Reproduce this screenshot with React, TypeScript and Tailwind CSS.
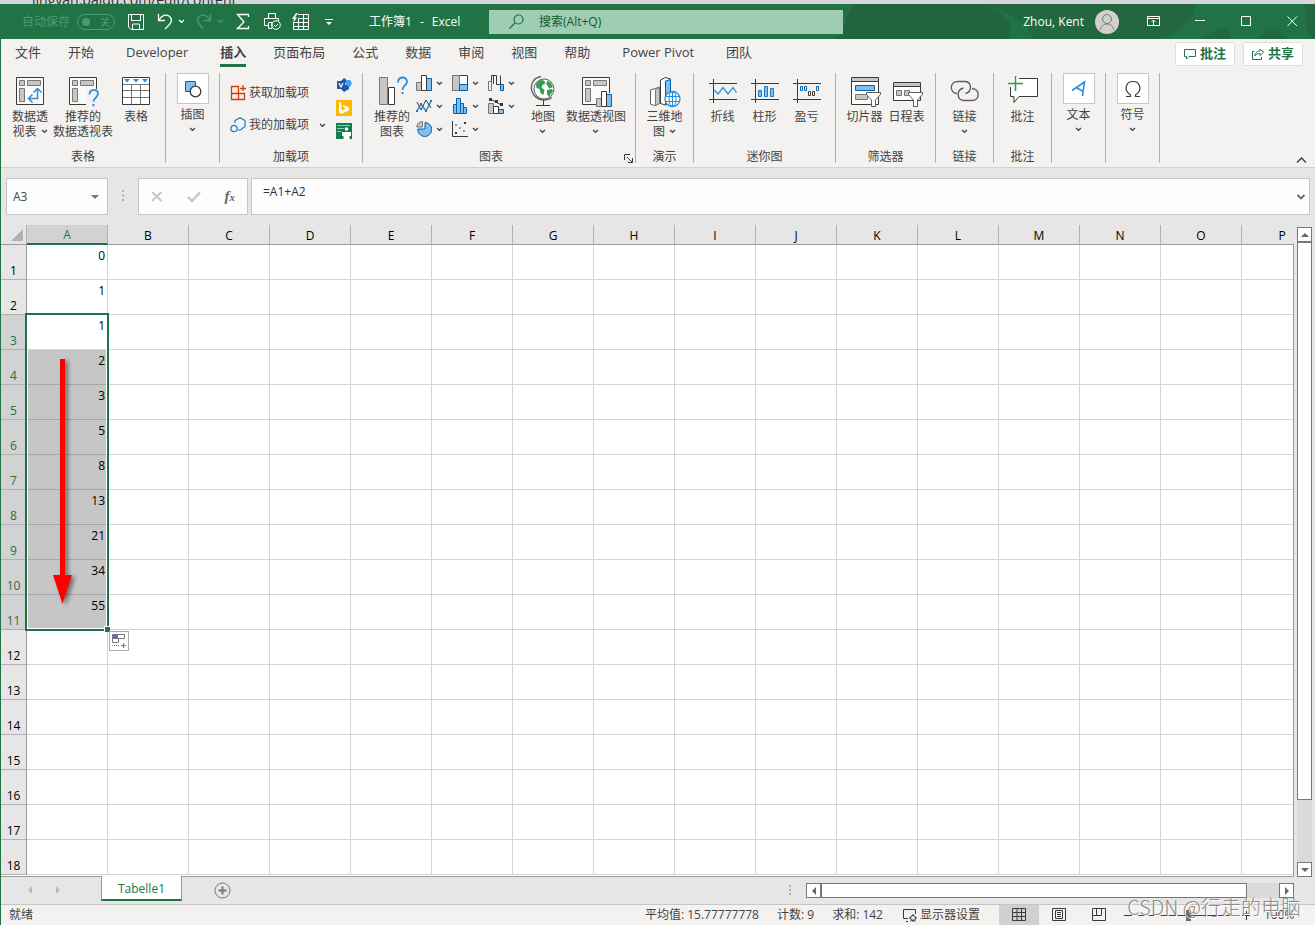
import type { ReactNode } from 'react';
import { useState } from 'react';

const COLUMNS = ['A', 'B', 'C', 'D', 'E', 'F', 'G', 'H', 'I', 'J', 'K', 'L', 'M', 'N', 'O', 'P'];
const VALUES = [0, 1, 1, 2, 3, 5, 8, 13, 21, 34, 55];
const ROW_COUNT = 18;
const SELECTION = { first: 3, last: 11 };

const TABS = [
  { label: '文件' },
  { label: '开始' },
  { label: 'Developer', latin: true },
  { label: '插入' },
  { label: '页面布局' },
  { label: '公式' },
  { label: '数据' },
  { label: '审阅' },
  { label: '视图' },
  { label: '帮助' },
  { label: 'Power Pivot', latin: true },
  { label: '团队' },
];

interface IconProps {
  children: ReactNode;
  size?: number;
  className?: string;
}

function Icon({ children, size = 32, className = '' }: IconProps) {
  return (
    <svg
      width={size}
      height={size}
      viewBox={`0 0 ${size} ${size}`}
      fill="none"
      stroke="#3b3a39"
      aria-hidden="true"
      className={`shrink-0 ${className}`}
    >
      {children}
    </svg>
  );
}

function Chevron({ className = '' }: { className?: string }) {
  return (
    <svg width="7" height="5" viewBox="0 0 7 5" fill="none" stroke="currentColor" strokeWidth="1.3" aria-hidden="true" className={`shrink-0 ${className}`}>
      <path d="M1 1l2.5 2.3L6 1" />
    </svg>
  );
}

function Triangle({ dir }: { dir: 'up' | 'down' | 'left' | 'right' }) {
  const d = {
    up: 'M0 6l4-4 4 4z',
    down: 'M0 2l4 4 4-4z',
    left: 'M6 0L2 4l4 4z',
    right: 'M2 0l4 4-4 4z',
  }[dir];
  return (
    <svg width="8" height="8" viewBox="0 0 8 8" fill="currentColor" aria-hidden="true" className="shrink-0">
      <path d={d} />
    </svg>
  );
}

/* ---------- ribbon icons ---------- */

function PivotFrame() {
  return (
    <>
      <path d="M2.5 2.5h27v27h-27z" fill="#fafafa" />
      <g fill="#c8c6c4" stroke="#797775">
        <path d="M5.5 5.5h5v5h-5zM13.500 5.500h13v5h-13zM5.500 13.500h5v13h-5z" />
      </g>
    </>
  );
}

const PivotTableIcon = () => (
  <Icon>
    <PivotFrame />
    <path d="M15 23.500h8.500V14M18.500 19.500l-4 4 4 4M19.500 17.500l4-4 4 4" stroke="#2b8fd6" strokeWidth="1.500" />
  </Icon>
);

const RecommendedPivotIcon = () => (
  <Icon>
    <PivotFrame />
    <path d="M19 14h12v17H19z" fill="#f3f2f1" stroke="none" />
    <path d="M22.500 19.500c0-6 8.500-6 8.500-.8 0 4-4.500 3.800-4.500 8" stroke="#2b8fd6" strokeWidth="1.800" />
    <path d="M25.500 29h2v2.200h-2z" fill="#2b8fd6" stroke="none" />
  </Icon>
);

const TableIcon = () => (
  <Icon>
    <path d="M2.500 2.500h27v27h-27z" fill="#fff" />
    <path d="M3 9.500h26M3 15.500h26M3 22.500h26M11.500 9v20M20.500 9v20" stroke="#797775" />
    <path d="M4 4h6L7 7.500zM13 4h6l-3 3.500zM22 4h6l-3 3.500z" fill="#2b8fd6" stroke="none" />
  </Icon>
);

const ShapesIcon = () => (
  <Icon size={20}>
    <path d="M2.500 2.500h10v10h-10z" fill="#83beec" stroke="#0063b1" />
    <circle cx="12.500" cy="12.500" r="5.300" fill="#fff" strokeWidth="1.300" />
  </Icon>
);

const RecommendedChartsIcon = () => (
  <Icon>
    <path d="M3.500 2.500h8v27h-8z" fill="#c8c6c4" stroke="#797775" />
    <path d="M12.500 12.500h6v17h-6z" fill="#fff" />
    <path d="M22 7.500c0-6.500 9-6.500 9-1 0 4-4.500 4-4.500 8.500" stroke="#2b8fd6" strokeWidth="1.800" />
    <path d="M25.500 17h2v2h-2z" fill="#2b8fd6" stroke="none" />
  </Icon>
);

const GlobeMapIcon = () => (
  <Icon>
    <circle cx="17" cy="14" r="10" fill="#fff" stroke="#605e5c" />
    <path d="M14 1.500C5 3 2 12 6.500 19.500c5 7 14 6.500 18.500 3" stroke="#605e5c" strokeWidth="1.300" />
    <path d="M9 9l4-4 4 .5 1.500 3-3 1.500-1 2.500 3 2.500-1 5-3-2-1-4-3-1zM20 5.500l4 2.500 2 4-3.500 1.500-3-4zM20 15l5-1 1 2-4 6-2-3z" fill="#2f9e4f" stroke="none" />
    <path d="M16.500 25v5M9 30.500h14" />
  </Icon>
);

const PivotChartIcon = () => (
  <Icon>
    <path d="M16 29.500H2.500v-27h27V18" fill="#fafafa" />
    <path d="M5.500 5.500h5v5h-5zM13.500 5.500h13v5h-13zM5.500 13.500h5v13h-5z" fill="#c8c6c4" stroke="#797775" />
    <path d="M16.500 23.500h5v8h-5z" fill="#c8c6c4" stroke="#797775" />
    <path d="M26.500 19.500h5v12h-5z" fill="#83beec" stroke="#0063b1" />
    <path d="M21.500 16.500h5v15h-5z" fill="#fff" />
  </Icon>
);

const Map3dIcon = () => (
  <Icon>
    <path d="M6.500 13.500l-5 1.500v14l4 1.500 5-2V12z" fill="#fff" stroke="#605e5c" />
    <path d="M6.500 14.500l4-2v16l-4 2z" fill="#c8c6c4" stroke="#797775" />
    <path d="M11.500 5l5-2.500 5 1.500v24l-5 2-5-1.500z" fill="#fff" />
    <path d="M16.500 6l5-1.500v23l-5 2z" fill="#83beec" stroke="#0063b1" />
    <circle cx="23.500" cy="24" r="7.500" fill="#fff" stroke="#2b8fd6" strokeWidth="1.300" />
    <ellipse cx="23.500" cy="24" rx="3.500" ry="7.500" stroke="#2b8fd6" />
    <path d="M17 21.500h13M17 26.500h13M23.500 17v14" stroke="#2b8fd6" />
  </Icon>
);

const SparkFrame = () => <path d="M6.500 4v24M2 8.500h28M2 24.500h28" />;

const SparkLineIcon = () => (
  <Icon>
    <SparkFrame />
    <path d="M7 15l4 4 5-6.500 5 6.500 5-6.500 3.500 5" stroke="#2b8fd6" strokeWidth="1.300" />
  </Icon>
);

const SparkColumnIcon = () => (
  <Icon>
    <SparkFrame />
    <path d="M9.500 15.500h3v6h-3zM15.500 11.500h3v10h-3zM21.500 13.500h3v8h-3z" fill="#83beec" stroke="#1979c4" />
  </Icon>
);

const SparkWinLossIcon = () => (
  <Icon>
    <SparkFrame />
    <path d="M9.500 11.500h2v4h-2zM13.500 11.500h2v4h-2zM25.500 11.500h2v4h-2z" fill="#fff" stroke="#0063b1" />
    <path d="M17.500 16.500h2v4h-2zM21.500 16.500h2v4h-2z" fill="#fff" />
  </Icon>
);

const Funnel = () => (
  <path d="M17.500 17.500h14v2l-5 5.500v6.500h-4V25l-5-5.500z" fill="#fff" stroke="#605e5c" />
);

const SlicerIcon = () => (
  <Icon>
    <path d="M2.500 2.500h27v27h-27z" fill="#fff" />
    <path d="M3 3h26v3H3z" fill="#c8c6c4" stroke="none" />
    <path d="M3 6.500h26" />
    <path d="M6.500 10.500h19v5h-19z" fill="#83beec" stroke="#0063b1" />
    <path d="M6.500 19.500h12v5h-12z" fill="#c8c6c4" stroke="#797775" />
    <Funnel />
  </Icon>
);

const TimelineIcon = () => (
  <Icon>
    <path d="M2.500 7.500h27v18h-27z" fill="#fff" />
    <path d="M3 8h26v3H3z" fill="#c8c6c4" stroke="none" />
    <path d="M3 11.500h26" />
    <path d="M5.500 15.500h5v5h-5zM13.500 15.500h5v5h-5z" fill="#c8c6c4" stroke="#797775" />
    <Funnel />
  </Icon>
);

const LinkIcon = () => (
  <Icon>
    <g stroke="#605e5c" strokeWidth="1.400">
      <path d="M8 18.500C0 17.500.5 6.500 9 6.500h6.500c7.500 0 8 10 1 12" />
      <path d="M12.500 25.500" />
      <path d="M23 13.500c8.500.5 8 12 0 12H15.500c-8 0-8.500-10.500-1-12.500" />
    </g>
  </Icon>
);

const NewCommentIcon = () => (
  <Icon>
    <path d="M3.500 3.500h27v18H14l-6.500 6v-6h-4z" fill="#fff" stroke="none" />
    <path d="M12 3.500h18.500v18H12l-5 6v-6H3.500V12" />
    <path d="M1 8.500h15M8.500 1v15" stroke="#f3f2f1" strokeWidth="4" />
    <path d="M1 8.500h15M8.500 1v15" stroke="#2f9e4f" strokeWidth="1.400" />
  </Icon>
);

const AddInsIcon = () => (
  <Icon size={16}>
    <path d="M8.500 8.500h6v6h-6zM1.500 8.500h7v6h-7zM1.500 1.500h7v7h-7zM13 0v6M10 3.500h6" stroke="#d83b01" strokeWidth="1.300" />
  </Icon>
);

const MyAddInsIcon = () => (
  <Icon size={16}>
    <path d="M5 6V3.500L10 .8l5 2.700v6L10.500 13H8" stroke="#1979c4" strokeWidth="1.200" />
    <circle cx="4" cy="11.500" r="3.200" stroke="#1979c4" strokeWidth="1.200" />
  </Icon>
);

const VisioIcon = () => (
  <Icon size={16}>
    <path d="M8 1l4 3-4 3-3-3zM8 8l5-2v6l-5 3-3-3z" fill="#185abd" stroke="none" />
    <path d="M10 3h4l2 3-2 4-4-2z" fill="#41a5ee" stroke="none" />
    <path d="M1 4h8v8H1z" fill="#2b579a" stroke="none" />
    <path d="M3 6l2 4 2-4" stroke="#fff" strokeWidth="1.200" />
  </Icon>
);

const BingIcon = () => (
  <Icon size={16}>
    <path d="M0 0h16v16H0z" fill="#ffb900" stroke="none" />
    <path d="M3 2l2.500 1v7.500L10 8.500 7.500 7 6.800 5 13 7.500v2.700L5.500 14 3 12.500z" fill="#fff" stroke="none" />
  </Icon>
);

const PeopleGraphIcon = () => (
  <Icon size={16}>
    <path d="M0 0h16v16H0z" fill="#107c4f" stroke="none" />
    <path d="M1 2.500h13M1 5.500h7M1 8.500h4" stroke="#8ecbb0" />
    <circle cx="10.500" cy="6" r="1.800" fill="#fff" stroke="none" />
    <path d="M6 9h9v4h-1.500v-2v5h-6v-5v2H6z" fill="#fff" stroke="none" />
  </Icon>
);

const CHARTS: { name: string; art: ReactNode }[] = [
  {
    name: '柱形图',
    art: (
      <>
        <path d="M.5 7.500h5v8h-5z" fill="#c8c6c4" stroke="#797775" />
        <path d="M10.500 3.500h5v12h-5z" fill="#83beec" stroke="#0063b1" />
        <path d="M5.500.5h5v15h-5z" fill="#fff" />
      </>
    ),
  },
  {
    name: '层次结构图',
    art: (
      <>
        <path d="M.5.5h15v15H.5z" fill="#fff" />
        <path d="M.5.5h7v15h-7z" fill="#c8c6c4" stroke="#797775" />
        <path d="M7.500 9.500h8v6h-8z" fill="#83beec" stroke="#0063b1" />
      </>
    ),
  },
  {
    name: '瀑布图',
    art: (
      <>
        <path d="M.5 15.500v-9h3v9z" stroke="#797775" />
        <path d="M3.500 6.500v-6h5v9h4v-9M5.500 1v8" />
        <path d="M12.500 9.500h3v6h-3z" fill="#83beec" stroke="#0063b1" />
      </>
    ),
  },
  {
    name: '折线图',
    art: (
      <>
        <path d="M1 4l4 8 5-10 5 8" />
        <path d="M1 13l4-7 5 7 5-10" stroke="#1979c4" strokeWidth="1.300" />
        <path d="M0 12h2v2H0zM4 5h2v2H4zM9 12h2v2H9zM14 2h2v2h-2z" fill="#1979c4" stroke="none" />
      </>
    ),
  },
  {
    name: '统计图',
    art: (
      <path d="M1.500 6.500h3v9h-3zM4.500.5h4v15h-4zM8.500 5.500h3v10h-3zM11.500 9.500h3v6h-3z" fill="#83beec" stroke="#0063b1" />
    ),
  },
  {
    name: '组合图',
    art: (
      <>
        <path d="M.5 5.500h5v10h-5z" fill="#c8c6c4" stroke="#797775" />
        <path d="M10.500 11.500h5v4h-5z" fill="#83beec" stroke="#0063b1" />
        <path d="M5.500 8.500h5v7h-5z" fill="#fff" />
        <path d="M2 1l6 3 5 3" />
        <path d="M1 0h3v3H1zM7 2h3v3H7zM12 5h3v3h-3z" fill="#3b3a39" stroke="none" />
      </>
    ),
  },
  {
    name: '饼图',
    art: (
      <>
        <path d="M9 1.500V8H1.800A7 7 0 1 0 9 1.500z" fill="#83beec" stroke="#0063b1" />
        <path d="M6.500.5v5.500H.8A6 6 0 0 1 6.500.5z" fill="#c8c6c4" stroke="#797775" />
      </>
    ),
  },
  {
    name: '散点图',
    art: (
      <>
        <path d="M.5 0v15.500H16" />
        <path d="M3 3h2v2H3zM7 6h2v2H7zM11 9h2v2h-2z" fill="#5ea9e0" stroke="none" />
        <path d="M12 1h2v2h-2zM3 11h2v2H3z" fill="#3b3a39" stroke="none" />
      </>
    ),
  },
];

/* ---------- ribbon pieces ---------- */

interface GroupProps {
  label?: string;
  width: string;
  labelClass?: string;
  children: ReactNode;
}

function Group({ label, width, labelClass = '', children }: GroupProps) {
  return (
    <section className={`relative flex h-[90px] shrink-0 flex-col justify-between border-r border-[#b3b0ad] ${width}`}>
      <div className="flex justify-center">{children}</div>
      {label && <h2 className={`text-center text-xs leading-3 ${labelClass}`}>{label}</h2>}
    </section>
  );
}

interface LargeButtonProps {
  icon: ReactNode;
  lines: string[];
  width: string;
  menu?: 'inline' | 'below';
}

function LargeButton({ icon, lines, width, menu }: LargeButtonProps) {
  return (
    <button type="button" className={`flex flex-col items-center gap-[2px] pt-[2px] hover:bg-[#e1dfdd] ${width}`}>
      {icon}
      <span className="text-center text-xs leading-[15px] whitespace-nowrap">
        {lines.map((line, i) => (
          <span key={line} className="flex items-center justify-center gap-1">
            {line}
            {menu === 'inline' && i === lines.length - 1 && <Chevron />}
          </span>
        ))}
        {menu === 'below' && (
          <span className="flex h-[15px] items-center justify-center">
            <Chevron />
          </span>
        )}
      </span>
    </button>
  );
}

function BoxButton({ icon, label }: { icon: ReactNode; label: string }) {
  return (
    <button type="button" className="flex flex-col items-center text-xs leading-[15px]">
      <span className="mb-[3px] flex h-[31px] w-8 items-center justify-center border border-[#c8c6c4] bg-white">{icon}</span>
      {label}
      <span className="flex h-[15px] items-center">
        <Chevron />
      </span>
    </button>
  );
}

function TitleBar() {
  return (
    <header className="relative flex h-[35px] shrink-0 items-center bg-[#217346] text-xs text-white">
      <svg className="absolute right-0 top-0 h-full w-[480px]" viewBox="0 0 480 35" aria-hidden="true">
        <path d="M20 0h130c20 6 30 20 24 35H0C14 26 8 10 20 0z" fill="#21653f" />
        <path d="M150 0h210c0 15-20 35-40 35H200c-10-14-20-26-50-35z" fill="#216840" />
        <path d="M375 30c8-8 20-8 22 5h-30zM425 32c6-8 20-8 28 3h-30zM470 0h10v35c-12-8-8-20-10-35z" fill="#216840" />
      </svg>
      <div className="relative flex w-[369px] shrink-0 items-center pl-[22px]">
        <label className="flex items-center gap-[7px] text-[#4e9a70]">
          自动保存
          <button type="button" role="switch" aria-checked="false" className="flex h-4 w-[38px] items-center justify-between rounded-full border border-[#4e9a70] px-1">
            <span className="h-2 w-2 rounded-full bg-[#4e9a70]" />
            <span className="text-[10px] leading-3">关</span>
          </button>
        </label>
        <button type="button" aria-label="保存" className="ml-[13px]">
          <Icon size={17}>
            <path d="M.5 1.500h15v15H3l-2.500-2.500zM3.500 1.500v6h9v-6M4.500 16v-5h7v5" stroke="#fff" />
          </Icon>
        </button>
        <button type="button" aria-label="撤消" className="ml-[12px]">
          <Icon size={17}>
            <path d="M1.500 1v6.500H8M1.500 7.500C5 2 9 1 12 3c4 3 2.500 6.500 0 9l-4 4" stroke="#fff" strokeWidth="1.300" />
          </Icon>
        </button>
        <Chevron className="ml-[4px]" />
        <button type="button" aria-label="恢复" className="ml-[11px]">
          <Icon size={17}>
            <path d="M14.500 1v6.500H8M14.500 7.500C11 2 7 1 4 3 0 6 1.500 9.500 4 12l3 4" stroke="#4e9a70" strokeWidth="1.300" />
          </Icon>
        </button>
        <Chevron className="ml-[4px] text-[#4e9a70]" />
        <button type="button" aria-label="求和" className="ml-[12px]">
          <Icon size={17}>
            <path d="M12.500 4V1.500h-11L8 9l-6.500 6.500h11V13" stroke="#fff" strokeWidth="1.300" />
          </Icon>
        </button>
        <button type="button" aria-label="打印预览" className="ml-[11px]">
          <Icon size={17}>
            <path d="M4.500 5.500v-5h7v5M4 12.500H.5v-7h14V8M4.500 10v5.500H8V9.500H4.500" stroke="#fff" />
            <circle cx="12" cy="12" r="4.300" stroke="#fff" />
            <path d="M10 12l1.500 1.500L14 11" stroke="#fff" />
          </Icon>
        </button>
        <button type="button" aria-label="表格" className="ml-[11px]">
          <Icon size={17}>
            <path d="M6 1.500h10.500v15H1.500V9M6 5.500h10.500M1.500 9.500h15M1.500 13.500h15M6.500 6v10.500M11.500 1.500v15" stroke="#fff" />
            <path d="M4 0L0 6h2L1 10l4-5.500H3L6 0z" fill="#fff" stroke="none" />
          </Icon>
        </button>
        <button type="button" aria-label="自定义快速访问工具栏" className="ml-[16px]">
          <Icon size={8}>
            <path d="M0 1.500h8" stroke="#fff" />
            <path d="M1 4h6L4 7z" fill="#fff" stroke="none" />
          </Icon>
        </button>
      </div>
      <h1 className="relative flex w-[120px] shrink-0 gap-2 whitespace-nowrap">
        <span>工作簿1</span>
        <span>-</span>
        <span>Excel</span>
      </h1>
      <label className="relative flex h-6 w-[354px] items-center bg-[#9fcdb3] pl-5 text-[#0f5a30]">
        <Icon size={15}>
          <path d="M.5 14.500L6 9" stroke="#1d6b40" strokeWidth="1.300" />
          <circle cx="9.500" cy="5.500" r="4.500" stroke="#1d6b40" strokeWidth="1.200" />
        </Icon>
        <input type="search" aria-label="搜索" placeholder="搜索(Alt+Q)" className="ml-[15px] min-w-0 flex-1 bg-transparent outline-none placeholder:text-[#0f5a30]" />
      </label>
      <div className="relative ml-auto flex items-center">
        <span>Zhou, Kent</span>
        <button type="button" aria-label="帐户" className="ml-[11px] mr-[12px] h-6 w-6 overflow-hidden rounded-full bg-[#d2d0ce]">
          <Icon size={24}>
            <circle cx="12" cy="9" r="4.500" stroke="#797775" />
            <path d="M5.500 20c0-8 13-8 13 0" stroke="#797775" />
          </Icon>
        </button>
        <button type="button" aria-label="功能区显示选项" className="flex w-[46px] justify-center">
          <Icon size={14}>
            <path d="M.5 1.500h12v9H.5zM.5 3.500h12M6.500 10V5.500M4.500 7l2-2 2 2" stroke="#fff" />
          </Icon>
        </button>
        <button type="button" aria-label="最小化" className="flex w-[46px] justify-center">
          <Icon size={11}>
            <path d="M0 4.500h10" stroke="#fff" />
          </Icon>
        </button>
        <button type="button" aria-label="最大化" className="flex w-[46px] justify-center">
          <Icon size={11}>
            <path d="M.5.5h9v9h-9z" stroke="#fff" />
          </Icon>
        </button>
        <button type="button" aria-label="关闭" className="flex w-[46px] justify-center">
          <Icon size={11}>
            <path d="M.5.5l9.500 9.500M10 .5L.5 10" stroke="#fff" />
          </Icon>
        </button>
      </div>
    </header>
  );
}

function TabStrip({ active, onSelect }: { active: string; onSelect: (label: string) => void }) {
  return (
    <nav className="flex h-[29px] items-start pl-[14px] pr-3">
      <div className="flex gap-[27px] text-[13px]">
        {TABS.map((tab) => (
          <button
            key={tab.label}
            type="button"
            onClick={() => onSelect(tab.label)}
            className={`h-7 shrink-0 border-b-[3px] pt-[3px] whitespace-nowrap ${tab.latin ? 'mx-[5px]' : ''} ${
              tab.label === active ? 'border-[#217346] font-bold' : 'border-transparent'
            }`}
          >
            {tab.label}
          </button>
        ))}
      </div>
      <div className="ml-auto flex gap-2 pt-[3px] text-[13px] font-bold text-[#217346]">
        <button type="button" className="flex h-6 w-[60px] items-center justify-center gap-1 rounded-xs border border-[#e1dfdd] bg-white">
          <Icon size={12}>
            <path d="M.5 1.500h11v7H5L2.500 11V8.500h-2z" stroke="#217346" />
          </Icon>
          批注
        </button>
        <button type="button" className="flex h-6 w-[60px] items-center justify-center gap-1 rounded-xs border border-[#e1dfdd] bg-white">
          <Icon size={12}>
            <path d="M2.500 3.500h-2v8h9V9M3 8c0-4 3-5 5-5V1l3.500 3.200L8 7.500v-2C6 5.500 4 6 3 8z" stroke="#217346" />
          </Icon>
          共享
        </button>
      </div>
    </nav>
  );
}

function Ribbon() {
  return (
    <div className="relative flex h-[100px] border-b border-[#d2d0ce] pt-[5px]">
      <Group label="表格" width="w-[165px]">
        <LargeButton icon={<PivotTableIcon />} lines={['数据透', '视表']} width="w-[48px]" menu="inline" />
        <LargeButton icon={<RecommendedPivotIcon />} lines={['推荐的', '数据透视表']} width="w-[58px]" />
        <LargeButton icon={<TableIcon />} lines={['表格']} width="w-[48px]" />
      </Group>
      <Group width="w-[54px]">
        <BoxButton icon={<ShapesIcon />} label="插图" />
      </Group>
      <Group label="加载项" width="w-[143px]">
        <div className="flex w-full justify-between pl-[10px] pr-[10px] text-xs">
          <div className="flex flex-col pt-1">
            <button type="button" className="flex h-8 items-center gap-[3px]">
              <AddInsIcon />
              获取加载项
            </button>
            <button type="button" className="flex h-8 items-center gap-[3px]">
              <MyAddInsIcon />
              我的加载项
              <Chevron className="ml-[7px]" />
            </button>
          </div>
          <div className="flex flex-col gap-[7px] pt-[4px]">
            <button type="button" aria-label="Visio"><VisioIcon /></button>
            <button type="button" aria-label="Bing"><BingIcon /></button>
            <button type="button" aria-label="People Graph"><PeopleGraphIcon /></button>
          </div>
        </div>
      </Group>
      <Group label="图表" width="w-[273px]" labelClass="pr-4">
        <LargeButton icon={<RecommendedChartsIcon />} lines={['推荐的', '图表']} width="w-[44px]" />
        <div className="grid grid-cols-3 gap-x-[2px] gap-y-[3px] self-start pl-[2px]">
          {CHARTS.map((chart) => (
            <button key={chart.name} type="button" aria-label={chart.name} className="flex h-5 w-[34px] items-center gap-1">
              <Icon size={16}>{chart.art}</Icon>
              <Chevron />
            </button>
          ))}
        </div>
        <LargeButton icon={<GlobeMapIcon />} lines={['地图']} width="w-[42px]" menu="below" />
        <LargeButton icon={<PivotChartIcon />} lines={['数据透视图']} width="w-[64px]" menu="below" />
        <button type="button" aria-label="查看所有图表" className="absolute right-[2px] bottom-0">
          <Icon size={9}>
            <path d="M.5 6V.5H6M3 3l5 5M8.500 4v4.500H4" />
          </Icon>
        </button>
      </Group>
      <Group label="演示" width="w-[58px]">
        <LargeButton icon={<Map3dIcon />} lines={['三维地', '图']} width="w-[46px]" menu="inline" />
      </Group>
      <Group label="迷你图" width="w-[142px]">
        <LargeButton icon={<SparkLineIcon />} lines={['折线']} width="w-[42px]" />
        <LargeButton icon={<SparkColumnIcon />} lines={['柱形']} width="w-[42px]" />
        <LargeButton icon={<SparkWinLossIcon />} lines={['盈亏']} width="w-[42px]" />
      </Group>
      <Group label="筛选器" width="w-[100px]">
        <LargeButton icon={<SlicerIcon />} lines={['切片器']} width="w-[42px]" />
        <LargeButton icon={<TimelineIcon />} lines={['日程表']} width="w-[42px]" />
      </Group>
      <Group label="链接" width="w-[58px]">
        <LargeButton icon={<LinkIcon />} lines={['链接']} width="w-[42px]" menu="below" />
      </Group>
      <Group label="批注" width="w-[58px]">
        <LargeButton icon={<NewCommentIcon />} lines={['批注']} width="w-[42px]" />
      </Group>
      <Group width="w-[54px]">
        <BoxButton
          label="文本"
          icon={
            <Icon size={18}>
              <path d="M2 10.500L14.500 2 12.500 16M6 7.500l7.500 4" stroke="#2b8fd6" strokeWidth="1.600" />
            </Icon>
          }
        />
      </Group>
      <Group width="w-[54px]">
        <BoxButton
          label="符号"
          icon={
            <Icon size={18}>
              <path d="M2 16.500h4.500V15C-1 10 2 1.500 9 1.500S19 10 11.500 15v1.500H16" strokeWidth="1.200" />
            </Icon>
          }
        />
      </Group>
      <button type="button" aria-label="折叠功能区" className="absolute right-2 bottom-px">
        <Icon size={11}>
          <path d="M1 7.500L5.500 3 10 7.500" strokeWidth="1.300" />
        </Icon>
      </button>
    </div>
  );
}

function FormulaBar() {
  return (
    <div className="flex h-[57px] items-start bg-[#e6e6e6] pl-[5px] pr-[5px] pt-[10px] text-xs">
      <div className="flex h-[37px] w-[102px] items-center border border-[#c6c6c6] bg-[#fdfdfd] pl-[6px] pr-2 text-[#444]">
        <input aria-label="名称框" defaultValue="A3" className="min-w-0 flex-1 bg-transparent outline-none" />
        <button type="button" aria-label="名称列表" className="text-[#777]">
          <Triangle dir="down" />
        </button>
      </div>
      <Icon size={30} className="mt-[3px]">
        <path d="M14 9h2v2h-2zM14 13.500h2v2h-2zM14 18h2v2h-2z" fill="#b1b1b1" stroke="none" />
      </Icon>
      <div className="flex h-[37px] w-[110px] items-center justify-around border border-[#c6c6c6] bg-[#fdfdfd]">
        <button type="button" aria-label="取消">
          <Icon size={12}>
            <path d="M1 1l9.500 9M10.500 1L1 10" stroke="#c6c6c6" strokeWidth="2" />
          </Icon>
        </button>
        <button type="button" aria-label="输入">
          <Icon size={14}>
            <path d="M1 7l4 4 8-8.500" stroke="#c6c6c6" strokeWidth="2.400" />
          </Icon>
        </button>
        <button type="button" aria-label="插入函数" className="font-['Liberation_Serif',serif] text-[15px] leading-4 font-bold text-[#666] italic">
          f<span className="text-[11px]">x</span>
        </button>
      </div>
      <div className="ml-[3px] flex h-[37px] flex-1 items-center border border-[#c6c6c6] bg-[#fdfdfd] pl-[11px] pr-1">
        <input aria-label="编辑栏" defaultValue="=A1+A2" className="mb-[9px] min-w-0 flex-1 bg-transparent text-[#333] outline-none" />
        <button type="button" aria-label="展开编辑栏" className="text-[#666]">
          <svg width="8" height="6" viewBox="0 0 8 6" fill="none" stroke="currentColor" strokeWidth="1.8" aria-hidden="true">
            <path d="M.5 1L4 4.500 7.500 1" />
          </svg>
        </button>
      </div>
    </div>
  );
}

function Sheet() {
  const isSelected = (row: number) => row >= SELECTION.first && row <= SELECTION.last;

  return (
    <div className="relative min-w-0 flex-1 overflow-hidden border-b border-[#999] bg-white pb-px">
      <table className="w-[1322px] table-fixed border-separate border-spacing-0 text-xs text-black">
        <colgroup>
          <col className="w-[26px]" />
          {COLUMNS.map((c) => (
            <col key={c} className="w-[81px]" />
          ))}
        </colgroup>
        <thead>
          <tr className="h-5">
            <th className="border-r border-b border-r-[#b1b1b1] border-b-[#999] bg-[#e6e6e6] p-0">
              <svg width="12" height="12" viewBox="0 0 12 12" aria-hidden="true" className="ml-auto mr-[3px]">
                <path d="M12 0v12H0z" fill="#b1b1b1" />
              </svg>
            </th>
            {COLUMNS.map((c) => (
              <th
                key={c}
                scope="col"
                className={`border-r border-r-[#b1b1b1] p-0 pt-[2px] font-normal ${
                  c === 'A' ? 'border-b-2 border-b-[#217346] bg-[#d2d2d2] text-[#217346]' : 'border-b border-b-[#999] bg-[#e6e6e6]'
                }`}
              >
                {c}
              </th>
            ))}
          </tr>
        </thead>
        <tbody>
          {Array.from({ length: ROW_COUNT }, (_, i) => i + 1).map((row) => (
            <tr key={row} className="h-[35px]">
              <th
                scope="row"
                className={`border-r border-b border-r-[#999] border-b-[#b1b1b1] p-0 align-bottom leading-4 font-normal ${
                  isSelected(row) ? 'bg-[#d2d2d2] text-[#217346]' : 'bg-[#e6e6e6]'
                }`}
              >
                {row}
              </th>
              {COLUMNS.map((c) => (
                <td
                  key={c}
                  className={`border-r border-b border-r-[#d4d4d4] p-0 pr-[2px] text-right align-top leading-[22px] ${
                    c === 'A' && isSelected(row) && row !== SELECTION.first ? 'border-b-[#a6a6a6] bg-[#c6c6c6]' : 'border-b-[#d4d4d4]'
                  }`}
                >
                  {c === 'A' ? VALUES[row - 1] : null}
                </td>
              ))}
            </tr>
          ))}
        </tbody>
      </table>

      {/* selection frame with its fill handle */}
      <div className="pointer-events-none absolute top-[88px] left-[24px] h-[318px] w-[84px] border-2 border-[#217346]">
        <div className="h-full w-full border border-t-0 border-white" />
        <div className="absolute -right-[3px] -bottom-[3px] h-[6px] w-[6px] border-t border-l border-white bg-[#217346]" />
      </div>

      <svg width="30" height="254" viewBox="0 0 30 254" className="pointer-events-none absolute top-[132px] left-[50px] drop-shadow-[3px_2px_2px_rgba(0,0,0,0.45)]" aria-hidden="true">
        <path d="M9 2h5v216h7L11.500 247 2 218h7z" fill="#f00" />
      </svg>

      <button type="button" aria-label="自动填充选项" className="absolute top-[406px] left-[108px] border border-[#ababab] bg-white">
        <Icon size={18}>
          <path d="M2.500 2.500h12v4h-12zM2.500 6.500h6v4h-6z" stroke="#797775" />
          <path d="M3 3h5v3H3z" fill="#3b78ff" stroke="none" />
          <path d="M2 13.500h8" stroke="#797775" strokeDasharray="1 1" />
          <path d="M11 13.500h5M13.500 11v5" stroke="#797775" />
        </Icon>
      </button>
    </div>
  );
}

function VerticalScrollbar() {
  return (
    <div className="flex w-[22px] shrink-0 bg-[#e6e6e6]">
      <div className="mt-[19px] w-px bg-[#999]" />
      <div className="ml-[3px] flex w-[15px] flex-col pt-[2px] text-[#666]">
        <button type="button" aria-label="向上滚动" className="flex h-[15px] items-center justify-center border border-[#777] bg-white">
          <Triangle dir="up" />
        </button>
        <div className="flex-1 bg-[#dadada]">
          <div className="h-[90%] border border-[#777] bg-white" />
        </div>
        <button type="button" aria-label="向下滚动" className="flex h-[15px] items-center justify-center border border-[#777] bg-white">
          <Triangle dir="down" />
        </button>
      </div>
    </div>
  );
}

function SheetTabs() {
  return (
    <div className="flex h-7 shrink-0 items-start border-b border-[#c8c6c4] bg-[#e6e6e6] text-xs">
      <div className="flex w-[100px] items-center gap-5 pt-[9px] pl-[25px] text-[#bbb]">
        <button type="button" aria-label="上一个工作表"><Triangle dir="left" /></button>
        <button type="button" aria-label="下一个工作表"><Triangle dir="right" /></button>
      </div>
      <button type="button" className="relative -mt-px h-[25px] w-[81px] border-x border-b-2 border-x-[#999] border-b-[#217346] bg-white pt-[2px] text-[#217346]">
        Tabelle1
      </button>
      <button type="button" aria-label="新工作表" className="mt-[5px] ml-[32px]">
        <Icon size={17}>
          <circle cx="8.500" cy="8.500" r="7.500" stroke="#777" />
          <path d="M4.500 8.500h8M8.500 4.500v8" stroke="#777" strokeWidth="2" />
        </Icon>
      </button>
      <Icon size={16} className="mt-[6px] ml-auto mr-2">
        <path d="M7 2h2v2H7zM7 6h2v2H7zM7 10h2v2H7z" fill="#b1b1b1" stroke="none" />
      </Icon>
      <div className="mt-[6px] mr-[21px] flex h-[15px] w-[488px] text-[#666]">
        <button type="button" aria-label="向左滚动" className="flex w-[15px] items-center justify-center border border-[#777] bg-white">
          <Triangle dir="left" />
        </button>
        <div className="flex-1 bg-[#dadada]">
          <div className="h-full w-[93%] border border-[#777] bg-white" />
        </div>
        <button type="button" aria-label="向右滚动" className="flex w-[15px] items-center justify-center border border-[#777] bg-white">
          <Triangle dir="right" />
        </button>
      </div>
    </div>
  );
}

function StatusBar() {
  return (
    <footer className="relative flex h-5 shrink-0 items-center bg-[#f3f2f1] pl-2 text-xs leading-5 whitespace-nowrap text-[#444]">
      <span>就绪</span>
      <div className="ml-auto flex items-center gap-[18px]">
        <span>平均值: 15.77777778</span>
        <span>计数: 9</span>
        <span>求和: 142</span>
        <button type="button" className="ml-[2px] flex items-center gap-[2px]">
          <Icon size={15}>
            <path d="M5 10.500H.5v-9h12V6M3 13.500h2" />
            <circle cx="10" cy="10" r="2.500" />
            <path d="M10 6v2M10 12v2M6 10h2M12 10h2M7.500 13.500l1.500-2M12.500 13.500l-1.500-2" />
          </Icon>
          显示器设置
        </button>
      </div>
      <div className="ml-[19px] flex">
        <button type="button" aria-label="普通" className="flex h-5 w-10 items-center justify-center bg-[#d2d0ce]">
          <Icon size={14}>
            <path d="M.5.5h13v12H.5zM.5 4.500h13M.5 8.500h13M5 .5v12M9.500.5v12" />
          </Icon>
        </button>
        <button type="button" aria-label="页面布局" className="flex h-5 w-10 items-center justify-center">
          <Icon size={14}>
            <path d="M.5.5h13v12H.5zM3.500 2.500h7v8h-7zM5 4.500h4M5 6.500h4M5 8.500h4" />
          </Icon>
        </button>
        <button type="button" aria-label="分页预览" className="flex h-5 w-10 items-center justify-center">
          <Icon size={14}>
            <path d="M.5.5h13v12H.5zM.5 7.500h9v-7M4.500.5v7" />
          </Icon>
        </button>
      </div>
      <div className="flex w-[196px] items-center pl-[5px]">
        <button type="button" aria-label="缩小" className="w-[10px]">
          <Icon size={9}>
            <path d="M0 4.500h8" />
          </Icon>
        </button>
        <input
          type="range"
          aria-label="缩放"
          min={0}
          max={200}
          defaultValue={100}
          className="mx-[3px] h-px w-[102px] appearance-none bg-[#444] [&::-webkit-slider-thumb]:h-[11px] [&::-webkit-slider-thumb]:w-[5px] [&::-webkit-slider-thumb]:appearance-none [&::-webkit-slider-thumb]:bg-[#666]"
        />
        <button type="button" aria-label="放大" className="w-[10px]">
          <Icon size={9}>
            <path d="M0 4.500h8M4.500 0v9" />
          </Icon>
        </button>
        <button type="button" className="ml-3">100%</button>
      </div>
      <span className="pointer-events-none absolute right-[14px] bottom-[6px] font-['Noto_Sans_CJK_SC',sans-serif] text-[20px] leading-6 font-light text-[#8a8a8a] [text-shadow:1px_1px_0_#fff]">
        CSDN @行走的电脑
      </span>
    </footer>
  );
}

export default function App() {
  const [tab, setTab] = useState('插入');

  return (
    <div className="flex min-h-screen flex-col overflow-hidden bg-[#e6e6e6] font-['Open_Sans','Noto_Sans_CJK_SC',sans-serif] text-[#444]">
      <div className="flex h-1 shrink-0 items-end overflow-hidden bg-[#d5d7da] pl-8 text-[14px] leading-[8px] text-[#333]">
        jingyan.baidu.com/edit/content
      </div>
      <TitleBar />
      <div className="flex flex-1 flex-col border-l border-[#217346]">
        <div className="bg-[#f3f2f1]">
          <TabStrip active={tab} onSelect={setTab} />
          <Ribbon />
        </div>
        <FormulaBar />
        <main className="flex">
          <Sheet />
          <VerticalScrollbar />
        </main>
        <SheetTabs />
        <StatusBar />
      </div>
    </div>
  );
}
